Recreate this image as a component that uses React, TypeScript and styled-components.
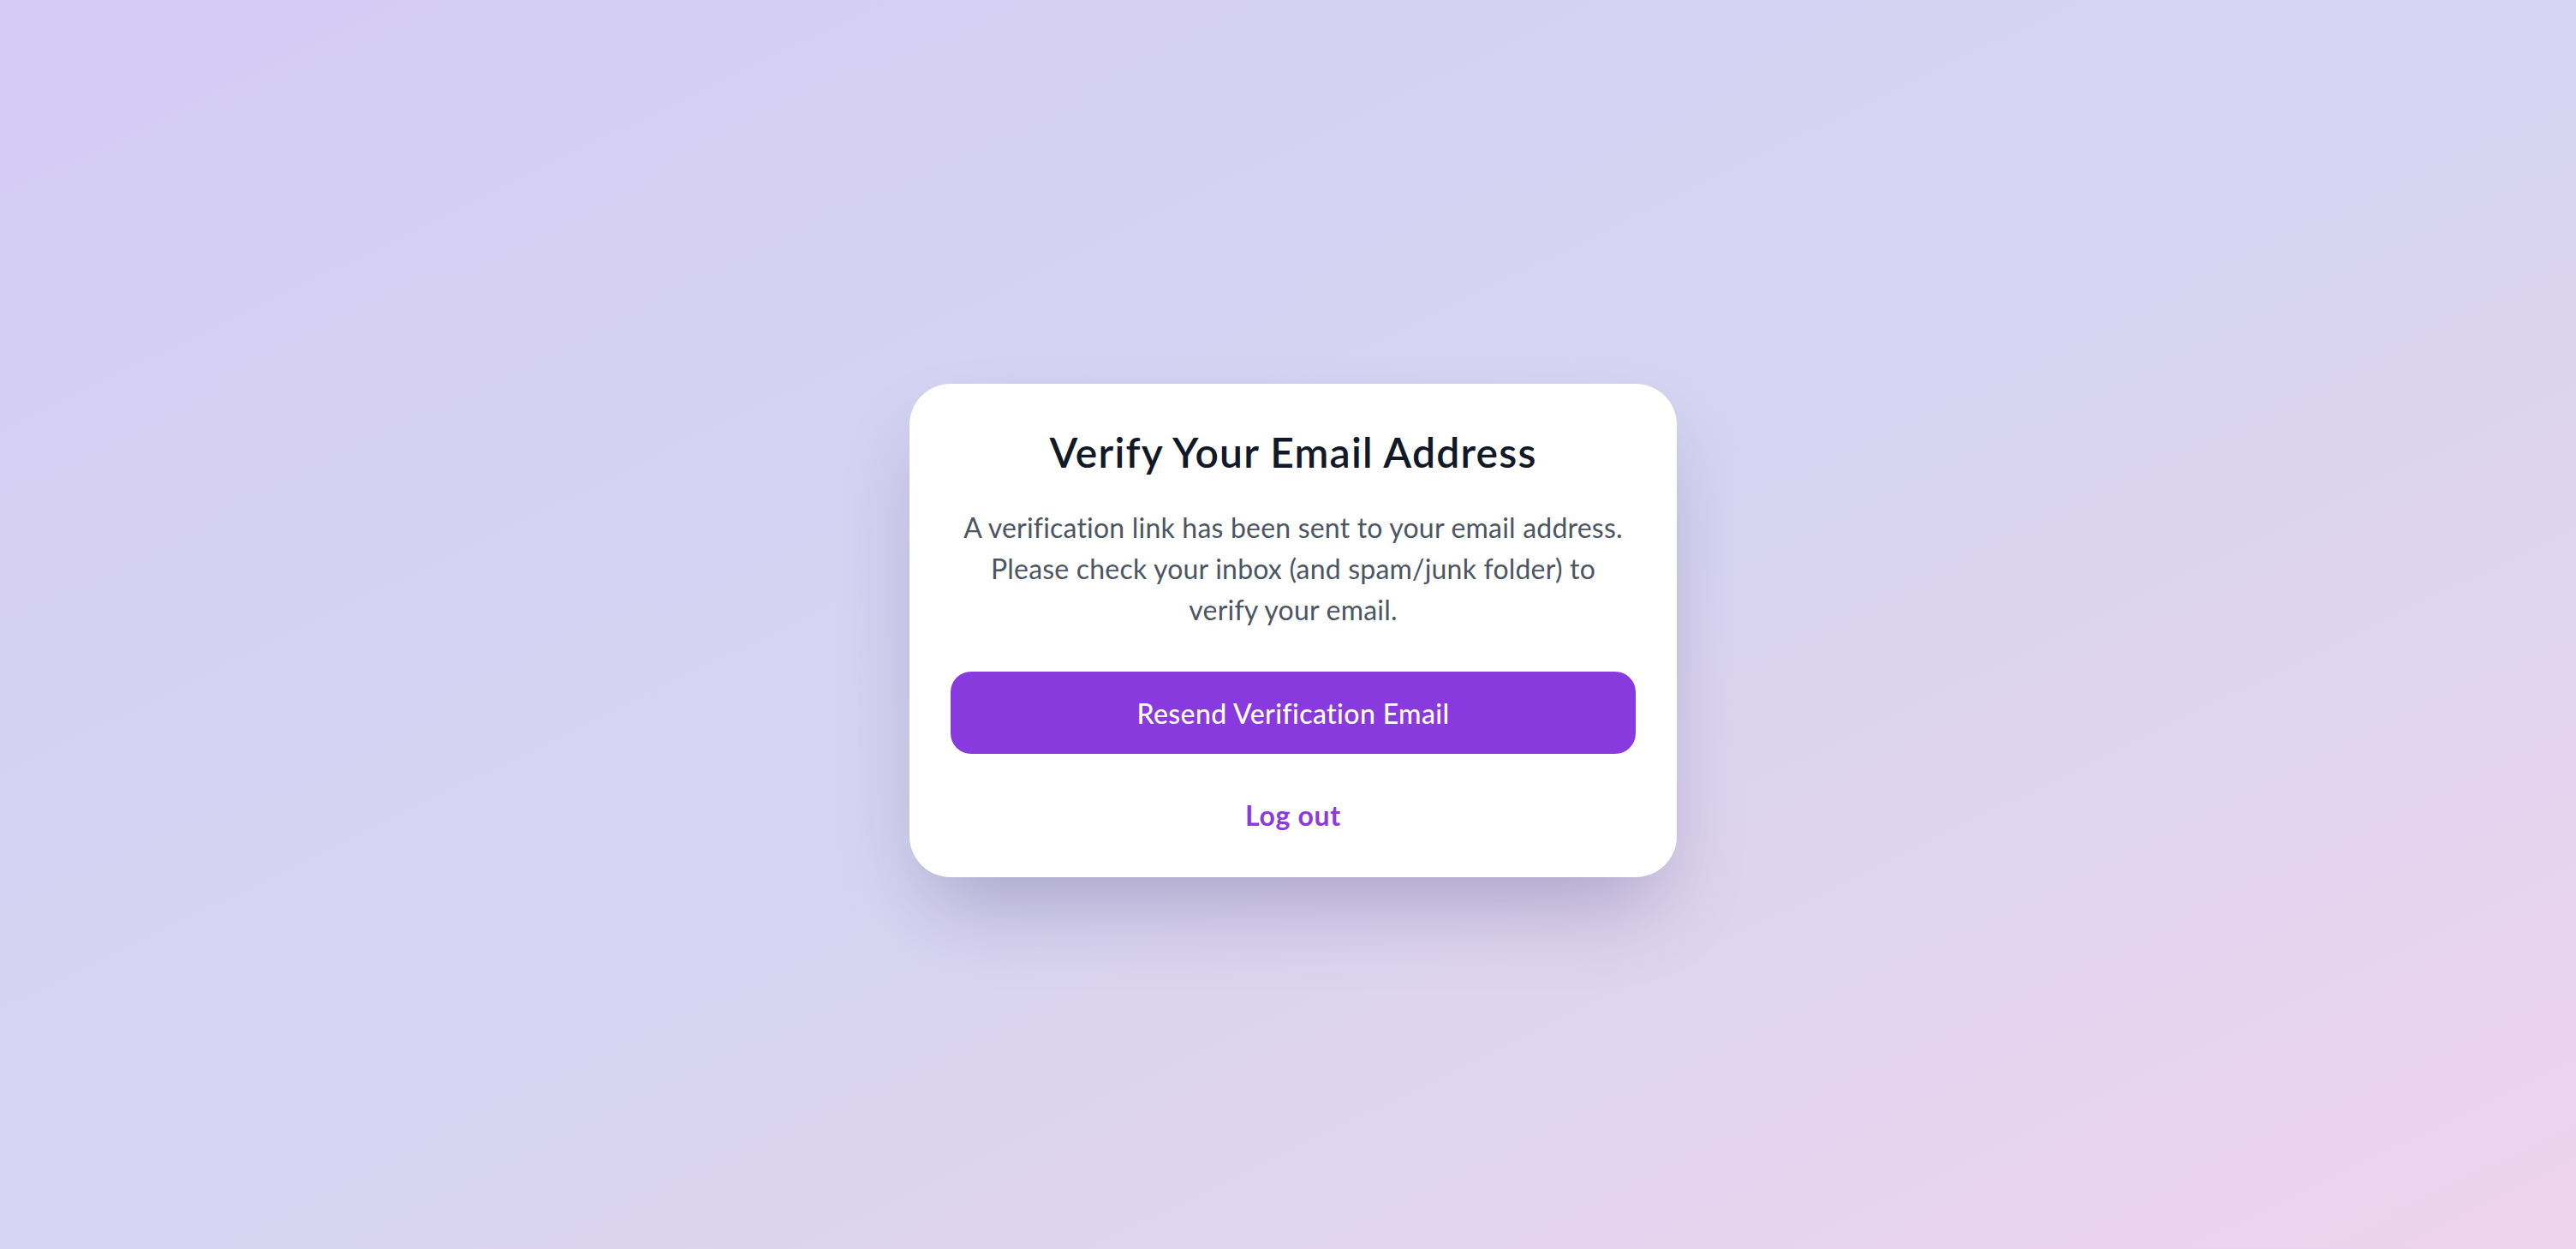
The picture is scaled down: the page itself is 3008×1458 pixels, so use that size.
import React from "react";
import styled, { createGlobalStyle } from "styled-components";

const GlobalStyle = createGlobalStyle`
    * {
        box-sizing: border-box;
    }
    html, body {
        margin: 0;
        padding: 0;
    }
    body {
        font-family: Lato, "Open Sans", sans-serif;
        -webkit-font-smoothing: antialiased;
    }
`

const Page = styled.div`
    display: flex;
    align-items: center;
    justify-content: center;
    min-height: 100vh;
    padding: 14px 0 0 12px;
    background: linear-gradient(to bottom right, #d4cbf5 0%, #d5d5f1 50%, #eed3ec 100%);
`

const Card = styled.div`
    display: flex;
    flex-direction: column;
    align-items: stretch;
    width: 896px;
    padding: 48px;
    border-radius: 48px;
    background-color: #ffffff;
    box-shadow: 0 50px 100px -24px rgba(40, 30, 90, 0.28);
    text-align: center;
`

const Title = styled.h2`
    margin: 0 0 32px;
    font-size: 48px;
    line-height: 64px;
    font-weight: 600;
    color: #111827;
    letter-spacing: 1.2px;
`

const Message = styled.p`
    margin: 0 0 48px;
    padding: 0 8px;
    font-size: 32px;
    line-height: 48px;
    color: #4b5563;
    letter-spacing: 0.2px;
`

const PrimaryButton = styled.button`
    width: 100%;
    height: 96px;
    border: none;
    border-radius: 24px;
    background-color: #893ade;
    color: #ffffff;
    font-family: inherit;
    font-size: 32px;
    font-weight: 500;
    letter-spacing: 0.4px;
    cursor: pointer;
`

const LinkButton = styled.button`
    align-self: center;
    margin-top: 48px;
    padding: 0;
    border: none;
    background: none;
    color: #8b3ae2;
    font-family: inherit;
    font-size: 32px;
    line-height: 48px;
    font-weight: 700;
    letter-spacing: 0.7px;
    cursor: pointer;
`

const App = () => {
    return (
        <>
            <GlobalStyle />
            <Page>
                <Card>
                    <Title>Verify Your Email Address</Title>
                    <Message>
                        A verification link has been sent to your email address.
                        Please check your inbox (and spam/junk folder) to verify your email.
                    </Message>
                    <PrimaryButton>Resend Verification Email</PrimaryButton>
                    <LinkButton>Log out</LinkButton>
                </Card>
            </Page>
        </>
    );
};

export default App;
